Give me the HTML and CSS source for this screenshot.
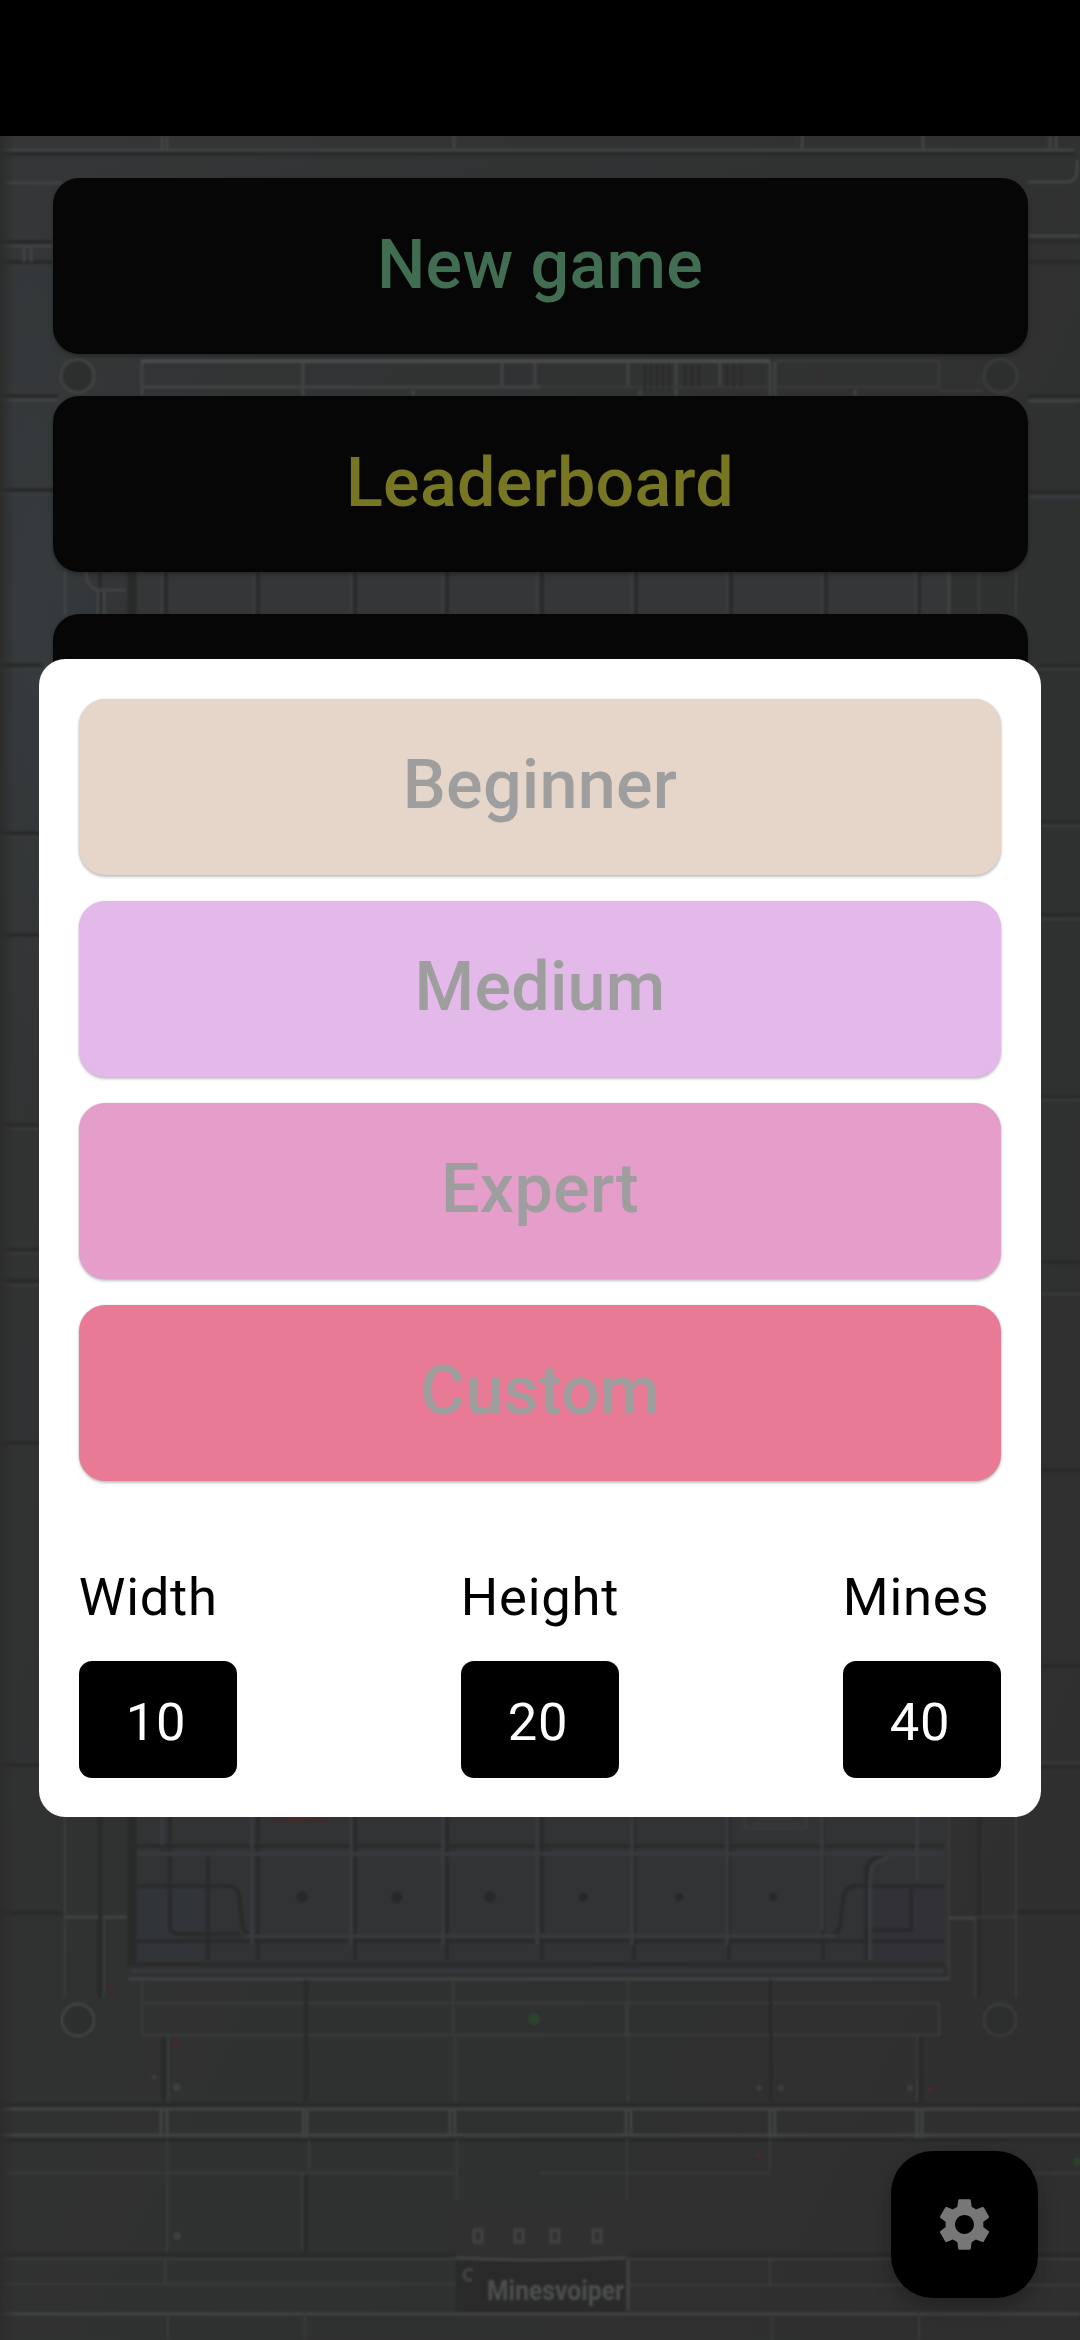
FILE: index.html
```html
<!DOCTYPE html>
<html lang="en">
<head>
<meta charset="utf-8">
<title>Minesweeper</title>
<link rel="stylesheet" href="styles.css">
</head>
<body>
<div class="screen">
  <div class="status-bar"></div>
  <main class="stage">
    <svg class="backdrop" viewBox="0 136 1080 2204" aria-hidden="true">
      <defs>
        <linearGradient id="wall" x1="0" y1="0" x2="1" y2="1">
          <stop offset="0" stop-color="#343637"/>
          <stop offset=".45" stop-color="#303131"/>
          <stop offset="1" stop-color="#2f2f2f"/>
        </linearGradient>
        <radialGradient id="glow">
          <stop offset="0" stop-color="#384045" stop-opacity=".55"/>
          <stop offset="1" stop-color="#384045" stop-opacity="0"/>
        </radialGradient>
        <linearGradient id="edge">
          <stop offset="0" stop-color="#2b2c2b"/>
          <stop offset="1" stop-color="#2b2c2b" stop-opacity="0"/>
        </linearGradient>
        <radialGradient id="alarm">
          <stop offset="0" stop-color="#6b2328"/>
          <stop offset="1" stop-color="#3a2c2d"/>
        </radialGradient>
      </defs>
      <rect x="0" y="136" width="1080" height="2204" fill="url(#wall)"/>
      <ellipse cx="35" cy="620" rx="90" ry="460" fill="url(#glow)"/>
      <g class="soft">
        <!-- top wall -->
        <path class="lo" d="M0 154H1075M0 242H52M0 262H52M1028 241H1080M1028 262H1080"/>
        <path class="hi" d="M0 150H1074M162 136V151M167 136V151M454 136V151M802 136V151M923 136V151M1050 136V151M1056 136V151M0 183H62M1028 182H1066Q1077 182 1077 170V160M0 246H52M24 246V262M31 246V262M1028 236H1080"/>
        <!-- upper pipe row -->
        <circle class="ring" cx="77.5" cy="376" r="16.5"/>
        <circle class="ring faint" cx="1000.5" cy="376" r="16.5"/>
        <path class="hi" d="M303 362V396M142 362V396M413 390V396M640 390V396M676 362V396M770 362V396M775 362V396M855 390V396M502 362V387M628 362V387M720 362V387M535 362V387M142 387H540"/>
        <path class="hi bright" d="M141 361H770"/>
        <path class="hi faint" d="M776 361H939V387H540M939 391H982"/>
        <path class="lo thin" d="M645 364V390M651 364V390M657 364V390M663 364V390M669 364V390M685 364V387M692 364V387M699 364V387M727 364V387M734 364V387M741 364V387"/>
        <path class="lo" d="M0 396H58M0 490H58M1028 396H1080M1028 492H1080"/>
        <path class="hi" d="M0 400H58M1028 401H1080"/>
        <path class="blue" d="M0 495H58M1028 497H1080"/>
        <!-- board top -->
        <rect x="128" y="571" width="820" height="44" fill="#353637"/>
        <path class="lo" d="M100 571V615M166 571V615M258 571V615M355 571V615M447 571V615M542 571V615M636 571V615M731 571V615M826 571V615M919 571V615"/>
        <path class="lo wide" d="M132 571V615"/>
        <path class="hi" d="M65 571V615M104 591V615M98 591V615M86 571Q86 588 98 590H126M949 571V615"/>
        <path class="blue" d="M162 571V615M254 571V615M351 571V615M443 571V615M537 571V615M632 571V615M727 571V615M822 571V615M916 571V615"/>
        <path class="hi faint" d="M979 571V615M1016 571V615"/>
        <!-- side walls -->
        <path class="lo" d="M0 665H42M0 833H42M0 935H42M0 1125H42M0 1250H42M0 1281H42M0 1443H42M0 1765H42M1038 666H1080M1038 822H1080M1038 915H1080M1038 1097H1080M1038 1262H1080M1038 1470H1080M1038 1666H1080M1038 1767H1080"/>
        <path class="hi faint" d="M0 670H42M0 837H42M0 1129H42M0 1253H42M0 1285H42M1038 669H1080M1038 826H1080M1038 919H1080M1038 1100H1080M1038 1294H1080M1038 1763H1080"/>
        <!-- board bottom -->
        <rect x="128" y="1810" width="820" height="156" fill="#323335"/>
        <rect x="137" y="1885" width="66" height="75" fill="#30363c" opacity=".6"/>
        <rect x="874" y="1885" width="70" height="75" fill="#303138" opacity=".6"/>
        <path class="lo wide" d="M132 1810V1966"/>
        <path class="lo" d="M131 1846H944M131 1964H944M137 1941H944M170 1810V1928Q170 1934 182 1934H240M258 1810V1960M355 1810V1960M447 1810V1960M542 1810V1960M634 1810V1960M729 1810V1960M823 1810V1960M208 1855V1960M137 1886H228Q240 1886 240 1902L243 1928Q246 1936 260 1936M944 1886H856Q844 1886 843 1900L840 1926Q838 1936 826 1936M866 1960V1874Q866 1857 884 1857M911 1886V1930H866"/>
        <path class="blue" d="M137 1854H944M246 1936H836M131 1971H944M162 1810V1845M252 1810V1945M351 1810V1945M443 1810V1945M537 1810V1945M632 1810V1945M727 1810V1945M822 1810V1930M870 1960V1876Q872 1859 888 1859M917 1810V1880"/>
        <rect x="271" y="1800" width="58" height="22" rx="5" fill="url(#alarm)"/>
        <path class="hi faint" d="M745 1816V1828H806V1816M752 1824H798M758 1817H790"/>
        <g fill="#272829"><circle cx="302" cy="1897" r="5.5"/><circle cx="397" cy="1897" r="5.5"/><circle cx="490" cy="1897" r="5.5"/><circle cx="583" cy="1897" r="4.5"/><circle cx="679" cy="1897" r="4"/><circle cx="773" cy="1897" r="4"/></g>
        <path class="lo" d="M0 1913H62M100 1810V1998M1018 1912H1080M979 1810V1998"/>
        <path class="hi faint" d="M65 1810V1998M104 1917V1998M949 1810V1978M975 1917V1998M1016 1810V1998M976 1917H1016"/>
        <path class="hi" d="M65 1917H98M103 1917H127M949 1918H975M128 1979H950"/>
        <!-- lower pipe row -->
        <circle class="ring" cx="78" cy="2020" r="16"/>
        <circle class="ring faint" cx="1000" cy="2020" r="16"/>
        <path class="hi faint" d="M142 1980V2035H939V2003H142M453 1980V2035M453 2003H626V2035M455 2035V2102M628 1980V2102M773 1980V2035M168 2037V2102M917 2037V2102"/>
        <path class="lo" d="M306 1980V2102M164 2037V2102M771 1980V2102M921 2037V2102M0 2105H1080M0 2140H1080M306 2173V2255M0 2255H455M628 2255H1080"/>
        <path class="hi" d="M0 2109H1080M0 2135H1080M161 2109V2138M167 2109V2138M303 2109V2138M307 2109V2138M450 2109V2135M455 2109V2135M626 2109V2135M631 2109V2135M770 2109V2138M775 2109V2138M917 2109V2138M922 2109V2138M0 2314H1080"/>
        <path class="hi faint" d="M0 2173H455M540 2173H770M928 2173H1080M167 2140V2252M309 2140V2170M457 2140V2200M627 2140V2200M770 2140V2170M302 2173V2250M0 2259H455M628 2259H1080M165 2259V2284M770 2259V2284M0 2284H455M628 2285H1080M168 2314V2340M305 2314V2340M772 2314V2340M919 2314V2340M0 2284Q4 2314 12 2314"/>
        <!-- name plate -->
        <rect x="455" y="2204" width="173" height="54" fill="#303030"/>
        <rect x="456" y="2260" width="170" height="52" fill="#2a2a2a"/>
        <path class="hi" d="M456 2258Q540 2262 626 2258M628 2260V2310"/>
        <path class="hi" d="M474 2230h8v12h-8zM515 2230h8v12h-8zM551 2230h8v12h-8zM593 2230h8v12h-8zM473 2270Q464 2268 464 2275Q465 2281 472 2280"/>
        <text class="plate-name" x="487" y="2300" textLength="137" lengthAdjust="spacingAndGlyphs">Minesvoiper</text>
        <!-- indicator lamps -->
        <g fill="#482a2b"><circle cx="111" cy="1989" r="3"/><circle cx="175" cy="2043" r="3"/><circle cx="758" cy="2155" r="3"/><circle cx="930" cy="2090" r="3"/><circle cx="816" cy="372" r="3" opacity=".5"/></g>
        <g fill="#2e432e"><circle cx="534" cy="2019" r="6"/><circle cx="1077" cy="2162" r="4"/></g>
        <g fill="#3d3f40"><circle cx="154" cy="2077" r="2.5"/><circle cx="177" cy="2087" r="4"/><circle cx="177" cy="2236" r="4"/><circle cx="759" cy="2088" r="3"/><circle cx="781" cy="2088" r="3"/><circle cx="910" cy="2088" r="3"/></g>
      </g>
      <rect x="0" y="136" width="14" height="2204" fill="url(#edge)"/>
    </svg>
    <nav class="menu">
      <button class="tile tile-new">New game</button>
      <button class="tile tile-board">Leaderboard</button>
      <button class="tile" aria-label="More"></button>
    </nav>
    <button class="fab" aria-label="Settings">
      <svg class="gear" viewBox="0 0 24 24"><path d="M19.14 12.94c.04-.3.06-.61.06-.94 0-.32-.02-.64-.07-.94l2.03-1.58c.18-.14.23-.41.12-.61l-1.92-3.32c-.12-.22-.37-.29-.59-.22l-2.39.96c-.5-.38-1.03-.7-1.62-.94L14.4 2.81c-.04-.24-.24-.41-.48-.41h-3.84c-.24 0-.43.17-.47.41L9.25 5.35C8.66 5.59 8.12 5.92 7.63 6.29L5.24 5.33c-.22-.08-.47 0-.59.22L2.74 8.87c-.12.21-.08.47.12.61l2.03 1.58C4.84 11.36 4.8 11.69 4.8 12s.02.64.07.94l-2.03 1.58c-.18.14-.23.41-.12.61l1.92 3.32c.12.22.37.29.59.22l2.39-.96c.5.38 1.03.7 1.62.94l.36 2.54c.05.24.24.41.48.41h3.84c.24 0 .44-.17.47-.41l.36-2.54c.59-.24 1.13-.56 1.62-.94l2.39.96c.22.08.47 0 .59-.22l1.92-3.32c.12-.22.07-.47-.12-.61L19.14 12.94zM12 15.6c-1.98 0-3.6-1.62-3.6-3.6s1.62-3.6 3.6-3.6 3.6 1.62 3.6 3.6-1.62 3.6-3.6 3.6z"/></svg>
    </button>
  </main>
  <section class="dialog" role="dialog">
    <div class="levels">
      <button class="tile level beginner">Beginner</button>
      <button class="tile level medium">Medium</button>
      <button class="tile level expert">Expert</button>
      <button class="tile level custom">Custom</button>
    </div>
    <div class="fields">
      <div class="field"><span class="label">Width</span><span class="value">10</span></div>
      <div class="field"><span class="label">Height</span><span class="value">20</span></div>
      <div class="field"><span class="label">Mines</span><span class="value">40</span></div>
    </div>
  </section>
</div>
</body>
</html>
```
FILE: styles.css
```css
* { box-sizing: border-box; }

body {
  margin: 0;
  background: #000;
  font-family: Roboto, "Liberation Sans", sans-serif;
}

button {
  border: 0;
  padding: 0;
  font-family: inherit;
}

.screen {
  position: relative;
  display: flex;
  flex-direction: column;
  width: 1080px;
  height: 2340px;
  overflow: hidden;
}

.status-bar { height: 136px; background: #000; }

.stage {
  position: relative;
  flex: 1;
  background: #303131;
}

/* Backdrop artwork */
.backdrop {
  position: absolute;
  inset: 0;
  width: 1080px;
  height: 2204px;
}
.soft { filter: blur(1px); }
.soft path { fill: none; }
.hi { stroke: #414344; stroke-width: 3; }
.hi.bright { stroke: #484a4b; stroke-width: 4; }
.hi.faint { stroke: #393b3b; stroke-width: 2.5; }
.lo { stroke: #292a2a; stroke-width: 4; }
.lo.thin { stroke-width: 2; }
.lo.wide { stroke-width: 9; }
.blue { stroke: #383b40; stroke-width: 3.5; }
.ring { fill: #2d2e2e; stroke: #414343; stroke-width: 3; }
.ring.faint { stroke: #3a3b3b; }
.plate-name {
  fill: #4c4e50;
  font-size: 27px;
  font-weight: 700;
}

/* Main menu */
.menu {
  position: relative;
  display: flex;
  flex-direction: column;
  gap: 42px;
  padding: 42px 52.5px;
}

.tile {
  height: 176px;
  padding-bottom: 3px;
  border-radius: 26.25px;
  background: #060606;
  box-shadow: 0 2px 4px rgba(0, 0, 0, .3);
  font-size: 68.25px;
  font-weight: 500;
  letter-spacing: .26px;
  line-height: 80px;
}
.tile-new { color: #416e52; }
.tile-board { color: #777622; }

.fab {
  position: absolute;
  right: 42px;
  bottom: 42px;
  display: grid;
  place-items: center;
  width: 147px;
  height: 147px;
  border-radius: 42px;
  background: #000;
  box-shadow: 0 8px 20px rgba(0, 0, 0, .28);
}
.gear { width: 63px; height: 63px; fill: #777; }

/* Difficulty dialog */
.dialog {
  position: absolute;
  top: 659.3px;
  left: 39.375px;
  right: 39.375px;
  height: 1157.4px;
  padding: 39.375px;
  border-radius: 26.25px;
  background: #fff;
}

.levels {
  display: flex;
  flex-direction: column;
  gap: 26.1px;
}
.level {
  color: #9e9e9e;
  box-shadow: 0 2px 3px rgba(0, 0, 0, .24), 0 0 2px rgba(0, 0, 0, .12);
}
.beginner { background: #e6d6c9; }
.medium { background: #e3b9e9; }
.expert { background: #e59dca; }
.custom { background: #e87a96; }

.fields {
  display: flex;
  justify-content: space-between;
  margin-top: 85.7px;
}
.field {
  display: flex;
  flex-direction: column;
  gap: 33.3px;
  width: 158.5px;
  font-size: 52.5px;
  letter-spacing: .8px;
  line-height: 61.5px;
}
.label { color: #000; }
.value {
  height: 116.4px;
  padding: 31px 4px 0 0;
  border-radius: 13px;
  background: #000;
  color: #fff;
  text-align: center;
}
```
